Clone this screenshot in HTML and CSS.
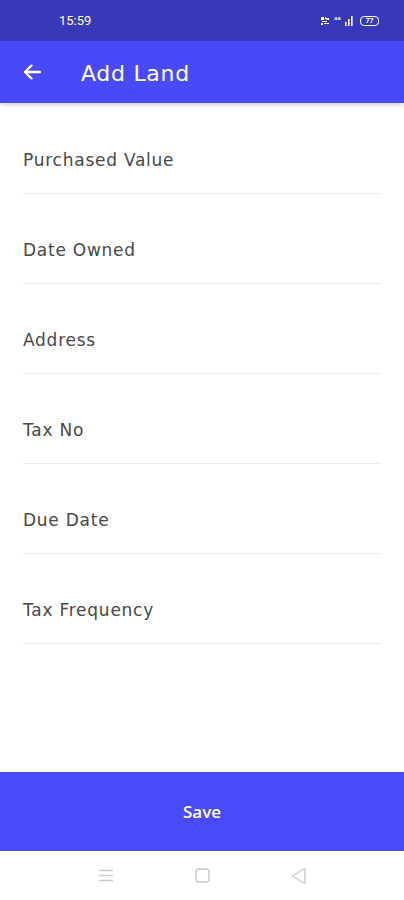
FILE: index.html
```html
<!DOCTYPE html>
<html>
<head>
<meta charset="utf-8">
<link rel="stylesheet" href="styles.css">
</head>
<body>
<div class="screen">
  <div class="statusbar">
    <span class="time">15:59</span>
    <div class="status-icons">
      <svg width="10" height="10" viewBox="0 0 10 10"><path d="M1 1h3v3H1zM5 1h1v2H5zM2 5h5v1H2zM1 7h2v2H1zM4 7h5v1H4zM6 2h3v2H6z" fill="#fff"/></svg>
      <span class="net">⁴⁶</span>
      <svg width="8" height="10" viewBox="0 0 8 10"><rect x="0" y="6" width="1.6" height="4" fill="#fff"/><rect x="3" y="3" width="1.6" height="7" fill="#fff"/><rect x="6" y="0" width="1.6" height="10" fill="#fff"/></svg>
      <span class="battery"><span class="bat-num">77</span></span>
    </div>
  </div>
  <header class="appbar">
    <svg class="back" width="18" height="16" viewBox="0 0 18 16"><path d="M17 8H2M8.5 1.5L2 8l6.5 6.5" fill="none" stroke="#fff" stroke-width="2.4" stroke-linecap="round" stroke-linejoin="round"/></svg>
    <h1 class="title">Add Land</h1>
  </header>
  <main class="form">
    <div class="field"><span class="label">Purchased Value</span></div>
    <div class="field"><span class="label">Date Owned</span></div>
    <div class="field"><span class="label">Address</span></div>
    <div class="field"><span class="label">Tax No</span></div>
    <div class="field"><span class="label">Due Date</span></div>
    <div class="field"><span class="label">Tax Frequency</span></div>
  </main>
  <button class="save">Save</button>
  <nav class="navbar">
    <svg width="16" height="13" viewBox="0 0 16 13"><path d="M1 1.5h14M1 6.5h14M1 11.5h14" stroke="#c9c9c9" stroke-width="1.4"/></svg>
    <svg width="15" height="15" viewBox="0 0 15 15"><rect x="1" y="1" width="13" height="13" rx="3" fill="none" stroke="#c9c9c9" stroke-width="1.4"/></svg>
    <svg width="16" height="16" viewBox="0 0 16 16"><path d="M14 1.5v13a.6.6 0 0 1-.9.5L2 8.5a.6.6 0 0 1 0-1L13.1 1a.6.6 0 0 1 .9.5z" fill="none" stroke="#c9c9c9" stroke-width="1.4" stroke-linejoin="round"/></svg>
  </nav>
</div>
</body>
</html>
```
FILE: styles.css
```css
* { box-sizing: border-box; }
html, body { margin: 0; padding: 0; background: #fff; }
body { font-family: "DejaVu Sans", "Noto Sans", sans-serif; }
.screen { width: 404px; height: 900px; display: flex; flex-direction: column; background: #fff; }
.statusbar {
  height: 41px; background: #3839b9; color: #fff;
  display: flex; align-items: center; justify-content: space-between;
  padding: 0 25px 0 59px;
}
.time { font-size: 13px; font-family: "Roboto", sans-serif; }
.status-icons { display: flex; align-items: center; gap: 4px; }
.net { font-size: 8px; font-weight: bold; line-height: 1; }
.battery {
  width: 19px; height: 10px; border: 1.3px solid #fff; border-radius: 4px;
  display: flex; align-items: center; justify-content: center; margin-left: 3px;
}
.bat-num { font-size: 7px; font-weight: bold; font-family: "Roboto", sans-serif; }
.appbar {
  height: 62px; background: #4849f7; display: flex; align-items: center;
  padding: 0 0 0 23px; box-shadow: 0 2px 4px rgba(0,0,0,0.18); position: relative; z-index: 1;
}
.back { display: block; }
.title { margin: 0 0 0 40px; padding-top: 2px; color: #fff; font-size: 22px; font-weight: normal; font-family: "DejaVu Sans", sans-serif; letter-spacing: 0.7px; }
.form { flex: 1; padding: 0 23px; display: flex; flex-direction: column; padding-top: 1px; }
.field {
  height: 90px; border-bottom: 1.5px solid #ececec;
  display: flex; align-items: center;
}
.label { font-size: 17px; color: #484848; padding-top: 22px; letter-spacing: 0.75px; }
.save {
  height: 79px; border: 0; background: #4a4bf8; color: #fff;
  font-family: "Open Sans", sans-serif; font-size: 17px; font-weight: 600; width: 100%;
  margin: 0; padding: 0 0 1px;
}
.navbar {
  height: 49px; display: flex; align-items: center; justify-content: space-between;
  padding: 0 97px 0 98px;
}
```
